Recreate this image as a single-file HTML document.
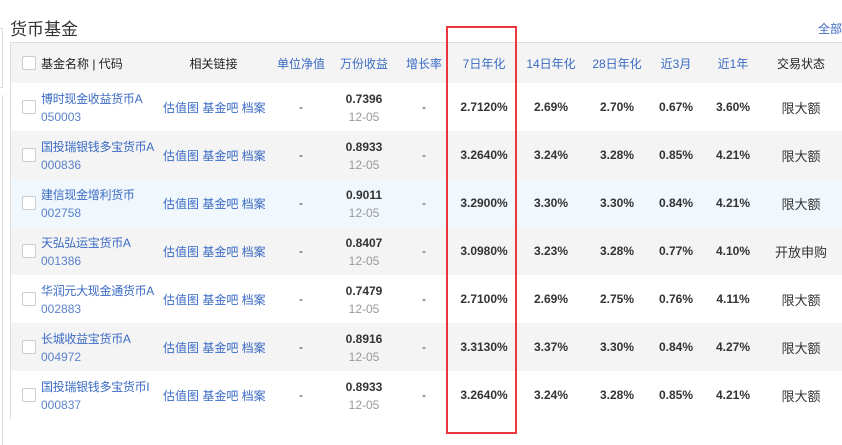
<!DOCTYPE html>
<html><head><meta charset="utf-8"><style>
*{margin:0;padding:0;box-sizing:border-box}
body{width:842px;height:437px;background:#fff;position:relative;overflow:hidden;font-family:"Liberation Sans","Noto Sans CJK SC",sans-serif;font-size:12px;color:#333}
.abs{position:absolute}
.title{left:10px;top:15px;font-size:17px;color:#333}
.all{left:818px;top:20px;color:#3b6bc4;font-size:12px}
.tbl{left:10px;top:42px;width:840px;height:377px;border:1px solid #ddd;border-right:none}
.row{position:absolute;left:0;width:840px;height:48px}
.c{position:absolute;top:0;height:100%;display:flex;align-items:center;justify-content:center;text-align:center;white-space:nowrap}
.cb{position:absolute;left:11px;width:14px;height:14px;border:1px solid #ccc;border-radius:2px;background:#fff}
.blue{color:#3b6bc4}
.b{font-weight:bold;font-size:12px;color:#333}
.d{color:#999;font-size:12px}
</style></head><body>
<div class="abs" style="left:0;top:28px;width:3px;height:60px;border:1px solid #ddd;border-left:none"></div>
<div class="abs" style="left:0;top:95px;width:3px;height:350px;border-right:1px solid #ddd"></div>
<div class="abs title">货币基金</div>
<div class="abs all">全部</div>
<div class="abs tbl">
<div class="row" style="top:0;height:40px;background:#f4f4f4">
<div class="cb" style="top:13px"></div>
<div class="c" style="left:30px;justify-content:flex-start;color:#222">基金名称 | 代码</div>
<div class="c" style="left:150px;width:105px;color:#222">相关链接</div>
<div class="c blue" style="left:260px;width:60px">单位净值</div>
<div class="c blue" style="left:323px;width:60px">万份收益</div>
<div class="c blue" style="left:388px;width:50px">增长率</div>
<div class="c blue" style="left:443px;width:60px">7日年化</div>
<div class="c blue" style="left:508px;width:64px">14日年化</div>
<div class="c blue" style="left:574px;width:64px">28日年化</div>
<div class="c blue" style="left:640px;width:50px">近3月</div>
<div class="c blue" style="left:697px;width:50px">近1年</div>
<div class="c" style="left:755px;width:70px;color:#222">交易状态</div>
</div>
</div>
<script>
var d=[["博时现金收益货币A","050003","0.7396","2.7120%","2.69%","2.70%","0.67%","3.60%","限大额","#fff"],
["国投瑞银钱多宝货币A","000836","0.8933","3.2640%","3.24%","3.28%","0.85%","4.21%","限大额","#f4f4f4"],
["建信现金增利货币","002758","0.9011","3.2900%","3.30%","3.30%","0.84%","4.21%","限大额","#f0f7fd"],
["天弘弘运宝货币A","001386","0.8407","3.0980%","3.23%","3.28%","0.77%","4.10%","开放申购","#f4f4f4"],
["华润元大现金通货币A","002883","0.7479","2.7100%","2.69%","2.75%","0.76%","4.11%","限大额","#fff"],
["长城收益宝货币A","004972","0.8916","3.3130%","3.37%","3.30%","0.84%","4.27%","限大额","#f4f4f4"],
["国投瑞银钱多宝货币I","000837","0.8933","3.2640%","3.24%","3.28%","0.85%","4.21%","限大额","#fff"]];
var h='';
d.forEach(function(r,i){
h+='<div class="row" style="top:'+(40+i*48)+'px;background:'+r[9]+'">'+
'<div class="cb" style="top:17px"></div>'+
'<div class="abs blue" style="left:30px;top:7px;font-size:12px;line-height:18px;white-space:nowrap;letter-spacing:-0.3px">'+r[0]+'<br><span style="font-size:12px;color:#5a82cc;letter-spacing:0">'+r[1]+'</span></div>'+
'<div class="c blue" style="left:152px;width:105px;font-size:12px;justify-content:flex-start">估值图 基金吧 档案</div>'+
'<div class="c" style="left:260px;width:60px">-</div>'+
'<div class="abs" style="left:323px;top:7px;width:60px;text-align:center;line-height:18px"><span class="b">'+r[2]+'</span><br><span class="d">12-05</span></div>'+
'<div class="c" style="left:388px;width:50px">-</div>'+
'<div class="c b" style="left:443px;width:60px">'+r[3]+'</div>'+
'<div class="c b" style="left:508px;width:64px">'+r[4]+'</div>'+
'<div class="c b" style="left:574px;width:64px">'+r[5]+'</div>'+
'<div class="c b" style="left:640px;width:50px">'+r[6]+'</div>'+
'<div class="c b" style="left:697px;width:50px">'+r[7]+'</div>'+
'<div class="c" style="left:755px;width:70px;font-size:13px">'+r[8]+'</div></div>';});
document.querySelector('.tbl').insertAdjacentHTML('beforeend',h);
</script>
<div class="abs" style="left:446px;top:26px;width:71px;height:408px;border:2px solid #e8383b"></div>
</body></html>
